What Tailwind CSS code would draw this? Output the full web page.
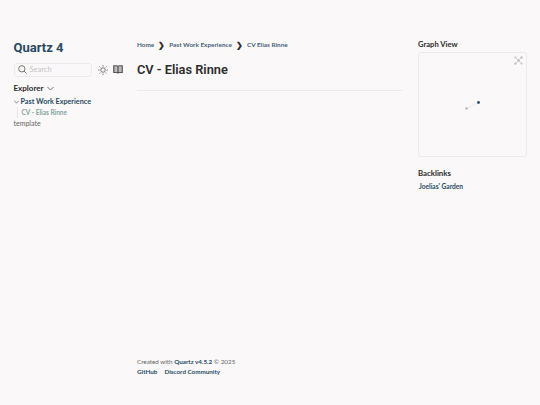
<!DOCTYPE html>
<html lang="en">
<head>
  <meta charset="UTF-8" />
  <title>CV - Elias Rinne</title>
  <script src="https://cdn.jsdelivr.net/npm/@tailwindcss/browser@4"></script>
</head>
<body class="bg-[#faf8f8] h-[405px] w-[540px] overflow-hidden font-['Lato',sans-serif] text-[#2b2b2b]">
  <div class="grid grid-cols-[137px_281px_122px] h-[405px]">

    <!-- left sidebar -->
    <div class="pl-[13.5px] pr-3 pt-[38px]">
      <h2 class="font-['Roboto',sans-serif] text-[13px] leading-[20px] font-bold text-[#284b63]">Quartz 4</h2>
      <div class="flex items-center mt-[4px] h-[15px]">
        <div class="w-[78px] h-[14px] border border-[#e5e5e5]/70 rounded-[3px] flex items-center pl-[3px] gap-[3px] text-[7.5px] text-[#c4c4c4]">
          <svg class="w-[9px] h-[9px]" viewBox="0 0 20 20" fill="none" stroke="#555" stroke-width="1.8"><circle cx="8.5" cy="8.5" r="7"/><path d="M13.5 13.5L19 19"/></svg>
          <span>Search</span>
        </div>
        <svg class="w-[10px] h-[10px] ml-[6px]" viewBox="0 0 20 20" fill="none" stroke="#555" stroke-width="1.5"><circle cx="10" cy="10" r="4.5"/><path d="M10 0v3M10 17v3M0 10h3M17 10h3M3 3l2 2M15 15l2 2M3 17l2-2M15 5l2-2"/></svg>
        <svg class="w-[10px] h-[9px] ml-[5px]" viewBox="0 0 20 18" fill="none" stroke="#555" stroke-width="2.4"><path d="M1.5 1.5h6a2.500 2.500 0 0 1 2.500 2.500v13a2 2 0 0 0-2-2H1.500zM18.500 1.500h-6a2.500 2.500 0 0 0-2.500 2.500v13a2 2 0 0 1 2-2h6.500z" fill="#bbb"/></svg>
      </div>
      <div class="flex items-center gap-[3px] mt-[3px] text-[8px] leading-[16px] font-bold">
        <span>Explorer</span>
        <svg class="w-[7px] h-[5px]" viewBox="0 0 14 8" fill="none" stroke="#444" stroke-width="1.5"><path d="M1 1l6 6 6-6"/></svg>
      </div>
      <div class="text-[7.2px] leading-[11px]">
        <div class="flex items-center gap-[2px] font-bold text-[#284b63]">
          <svg class="w-[5px] h-[4px]" viewBox="0 0 14 8" fill="none" stroke="#284b63" stroke-width="1.8"><path d="M1 1l6 6 6-6"/></svg>
          <span>Past Work Experience</span>
        </div>
        <div class="ml-[3px] pl-[4px] text-[6.5px] border-l border-[#e5e5e5] font-bold text-[#84a59d]">CV - Elias Rinne</div>
        <div class="text-[7px] text-[#646464]">template</div>
      </div>
    </div>

    <!-- center -->
    <div class="flex flex-col h-[405px] pr-[15px]">
      <div class="flex items-center gap-[4px] pt-[40px] text-[6.4px] leading-[10px] font-bold text-[#284b63]/90">
        <span>Home</span><span class="text-[8px] text-[#2b2b2b]">❯</span>
        <span>Past Work Experience</span><span class="text-[8px] text-[#2b2b2b]">❯</span>
        <span>CV Elias Rinne</span>
      </div>
      <h1 class="font-['Roboto',sans-serif] text-[12.8px] leading-[18px] font-semibold mt-[11px]">CV - Elias Rinne</h1>
      <hr class="border-[#e5e5e5]/70 mt-[11px]" />
      <footer class="mt-auto mb-[28px] text-[6.3px] leading-[10px] text-[#646464]">
        <p>Created with <span class="font-bold text-[#284b63]">Quartz v4.5.2</span> © 2025</p>
        <div class="flex gap-[7px] font-bold text-[#284b63]"><span>GitHub</span><span>Discord Community</span></div>
      </footer>
    </div>

    <!-- right sidebar -->
    <div class="pt-[38px]">
      <h3 class="text-[7.6px] leading-[13px] font-bold">Graph View</h3>
      <div class="relative w-[109px] h-[105px] mt-[1px] border border-[#e5e5e5]/70 rounded-[3px]">
        <svg class="absolute inset-0" width="107" height="103" viewBox="0 0 107 103">
          <path d="M47.500 55.500L59.500 49.500" stroke="#ddd" stroke-width="0.5"/>
          <circle cx="47.500" cy="55.500" r="1.200" fill="#b5b5b5"/>
          <circle cx="59.500" cy="49.500" r="1.400" fill="#284b63"/>
        </svg>
        <svg class="absolute top-[3px] right-[3px] w-[9px] h-[9px]" viewBox="0 0 16 16" fill="#c4c4c4" stroke="#c4c4c4" stroke-width="1.300"><path d="M3 13L13 3M3 3l10 10"/><circle cx="8" cy="8" r="2"/><circle cx="13.500" cy="2.500" r="1.600"/><circle cx="2.500" cy="13.500" r="1.600"/><circle cx="2.500" cy="2.500" r="1.200"/><circle cx="13.500" cy="13.500" r="1.200"/></svg>
      </div>
      <h3 class="text-[7.8px] leading-[13px] font-bold mt-[10px]">Backlinks</h3>
      <div class="text-[6.600px] leading-[10px] font-bold text-[#284b63] pl-px mt-[1px]">Joelias' Garden</div>
    </div>
  </div>
</body>
</html>
